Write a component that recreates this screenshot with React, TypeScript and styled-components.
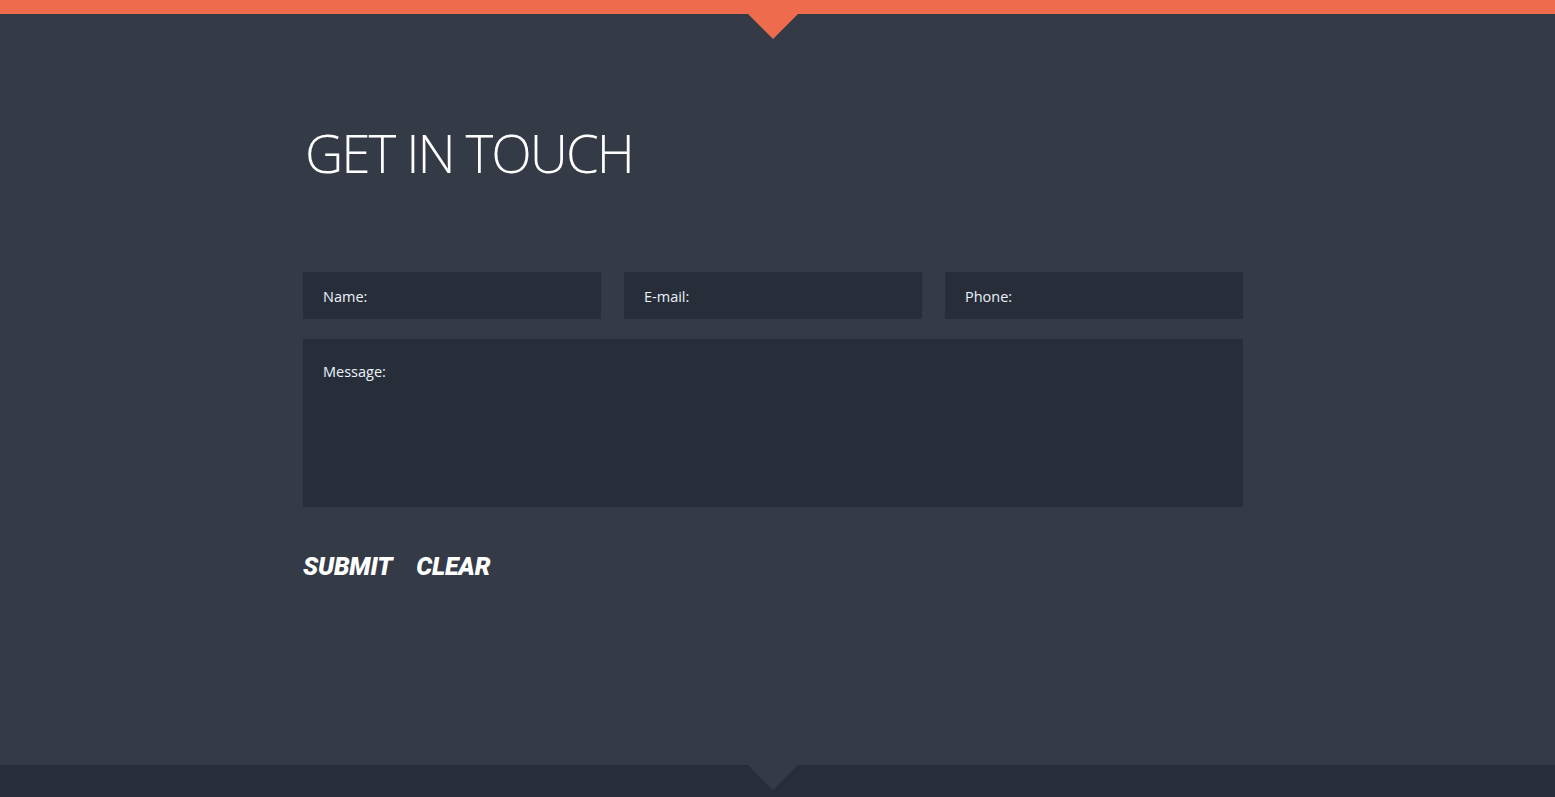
import React from "react";
import styled, { createGlobalStyle } from "styled-components";

const Global = createGlobalStyle`
  html, body { margin: 0; padding: 0; background: #343a46; }
  body { font-family: "Open Sans", "Liberation Sans", sans-serif; overflow: hidden; }
  * { box-sizing: border-box; }
`;

const Page = styled.div`
  height: 797px;
  display: flex;
  flex-direction: column;
  background: #343a46;
  padding-right: 9px;
`;

const TopBar = styled.div`
  height: 14px;
  background: #ef6b4e;
  position: relative;
  margin-right: -9px;
  &::after {
    content: "";
    position: absolute;
    top: 14px;
    left: 748px;
    border-left: 25px solid transparent;
    border-right: 25px solid transparent;
    border-top: 25px solid #ef6b4e;
  }
`;

const Section = styled.section`
  flex: 1;
  display: flex;
  justify-content: center;
`;

const Container = styled.div`
  width: 940px;
  padding-top: 104px;
`;

const Heading = styled.h1`
  margin: 0 0 84px 2px;
  font-family: "Open Sans", sans-serif;
  font-weight: 300;
  font-size: 53px;
  line-height: 70px;
  color: #ffffff;
  letter-spacing: -2px;
`;

const Form = styled.form`
  display: flex;
  flex-direction: column;
  gap: 20px;
`;

const Row = styled.div`
  display: grid;
  grid-template-columns: repeat(3, 298px);
  column-gap: 23px;
`;

const fieldStyles = `
  background: #282e39;
  border: none;
  outline: none;
  color: #ffffff;
  font-family: "Open Sans", sans-serif;
  font-size: 14.5px;
  padding: 0 20px;
  &::placeholder { color: #eaf2fb; opacity: 1; }
`;

const Input = styled.input`
  ${fieldStyles}
  height: 47px;
  line-height: 47px;
  padding-top: 2px;
`;

const TextArea = styled.textarea`
  ${fieldStyles}
  height: 168px;
  padding-top: 23px;
  resize: none;
  line-height: 20px;
`;

const Actions = styled.div`
  display: flex;
  gap: 24px;
  margin-top: 45px;
`;

const Btn = styled.button`
  background: none;
  border: none;
  padding: 0;
  color: #ffffff;
  font-family: Roboto, "Liberation Sans", sans-serif;
  font-weight: 900;
  font-style: italic;
  font-size: 25px;
  line-height: 30px;
  text-transform: uppercase;
  letter-spacing: -0.2px;
  cursor: pointer;
`;

const Footer = styled.div`
  height: 32px;
  background: #282e39;
  position: relative;
  margin-right: -9px;
  &::after {
    content: "";
    position: absolute;
    top: 0;
    left: 748px;
    border-left: 25px solid transparent;
    border-right: 25px solid transparent;
    border-top: 25px solid #343a46;
  }
`;

export default function App() {
  return (
    <>
      <Global />
      <Page>
        <TopBar />
        <Section>
          <Container>
            <Heading>GET IN TOUCH</Heading>
            <Form onSubmit={(e) => e.preventDefault()}>
              <Row>
                <Input placeholder="Name:" />
                <Input placeholder="E-mail:" />
                <Input placeholder="Phone:" />
              </Row>
              <TextArea placeholder="Message:" />
            </Form>
            <Actions>
              <Btn type="button">Submit</Btn>
              <Btn type="button">Clear</Btn>
            </Actions>
          </Container>
        </Section>
        <Footer />
      </Page>
    </>
  );
}
